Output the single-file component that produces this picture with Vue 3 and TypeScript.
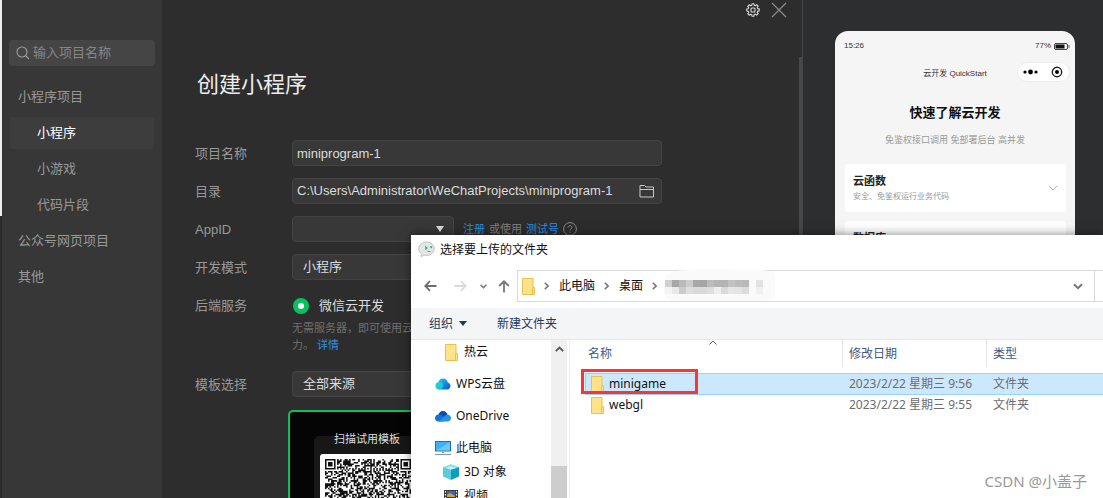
<script setup lang="ts">
import { ref } from 'vue'

interface NavItem { label: string; child?: boolean }
interface TreeItem { label: string; icon: string; group?: boolean; nested?: boolean }
interface FileRow { name: string; date: string; type: string }

const keyword = ref('')
const active = ref('小程序')
const projectName = ref('miniprogram-1')
const directory = ref('C:\\Users\\Administrator\\WeChatProjects\\miniprogram-1')

const nav: NavItem[] = [
  { label: '小程序项目' },
  { label: '小程序', child: true },
  { label: '小游戏', child: true },
  { label: '代码片段', child: true },
  { label: '公众号网页项目' },
  { label: '其他' },
]

const tree: TreeItem[] = [
  { label: '热云', icon: 'folder', nested: true },
  { label: 'WPS云盘', icon: 'wps', group: true },
  { label: 'OneDrive', icon: 'onedrive', group: true },
  { label: '此电脑', icon: 'pc', group: true },
  { label: '3D 对象', icon: 'cube', nested: true },
  { label: '视频', icon: 'video', nested: true },
]

const selected = ref('minigame')
const files: FileRow[] = [
  { name: 'minigame', date: '2023/2/22 星期三 9:56', type: '文件夹' },
  { name: 'webgl', date: '2023/2/22 星期三 9:55', type: '文件夹' },
]

const mosaicTop = ['#d0d0d0', '#a8a8a8', '#bababa', '#cccccc', '#a8a8a8', '#a5a5a5', '#bcbcbc', '#b4b4b4', '#b4b4b4', '#c2c2c2', '#bcbcbc', '#bababa']
const mosaicBottom = ['#f4f4f4', '#e8e8e8', '#cccccc', '#dedede', '#dadada', '#dadada', '#dedede', '#eeeeee', '#dadada', '#e6e6e6', '#e4e4e4', '#dcdcdc']

/* 57 x 57 symbol: three finders, alignment marks, timing lines, seeded data */
function buildCode(size: number): string {
  let seed = 20230222
  const next = () => {
    seed = (seed * 1103515245 + 12345) % 2147483648
    return seed / 2147483648
  }
  const finders = [[3, 3], [size - 4, 3], [3, size - 4]]
  const marks = [[28, 6], [6, 28], [28, 28], [50, 28], [28, 50], [50, 50]]
  let d = ''
  for (let y = 0; y < size; y++) {
    for (let x = 0; x < size; x++) {
      let on = next() > 0.48
      if (x === 6 || y === 6) on = (x + y) % 2 === 0
      for (const [cx, cy] of marks) {
        const r = Math.max(Math.abs(x - cx), Math.abs(y - cy))
        if (r <= 2) on = r !== 1
      }
      for (const [cx, cy] of finders) {
        const r = Math.max(Math.abs(x - cx), Math.abs(y - cy))
        if (r <= 4) on = r === 3 || r <= 1
      }
      if (on) d += `M${x} ${y}h1v1h-1z`
    }
  }
  return d
}
const code = buildCode(57)
</script>

<template>
  <div class="screen">
    <div class="edge"></div>

    <aside class="sidebar">
      <label class="search">
        <svg width="14" height="14" viewBox="0 0 14 14" fill="none" stroke="#a0a0a0" stroke-width="1.1"><circle cx="6" cy="6" r="5" /><path d="M9.6 9.6L13 13" /></svg>
        <input v-model="keyword" type="text" placeholder="输入项目名称" aria-label="输入项目名称" />
      </label>
      <nav class="nav">
        <button v-for="n in nav" :key="n.label" type="button" :class="{ child: n.child, on: n.label === active }" @click="active = n.label">{{ n.label }}</button>
      </nav>
    </aside>

    <main class="main">
      <div class="tools">
        <button type="button" aria-label="设置">
          <svg width="14" height="14" viewBox="0 0 14 14" fill="none" stroke="#dcdcdc" stroke-width="1.1" stroke-linejoin="round"><path d="M5.8 2.2L6 .7h2l.2 1.5 1.2.5 1.3-1 1.5 1.5-1 1.3.5 1.2 1.5.2v2l-1.5.2-.5 1.2 1 1.3-1.5 1.5-1.3-1-1.2.5L8 13.3H6l-.2-1.5-1.2-.5-1.3 1-1.5-1.5 1-1.3-.5-1.2L.7 8V6l1.5-.2.5-1.2-1-1.3 1.5-1.5 1.3 1z" /><rect x="5" y="5" width="4" height="4" rx="1" /></svg>
        </button>
        <button type="button" aria-label="关闭">
          <svg width="16" height="16" viewBox="0 0 16 16" stroke="#8c8c8c" stroke-width="1.2"><path d="M1 1l14 14M15 1L1 15" /></svg>
        </button>
      </div>
      <h1>创建小程序</h1>

      <form class="form" @submit.prevent>
        <label class="name" for="f-name">项目名称</label>
        <input id="f-name" v-model="projectName" class="field" type="text" />

        <label class="name" for="f-dir">目录</label>
        <div class="field dir">
          <input id="f-dir" v-model="directory" type="text" />
          <button type="button" aria-label="选择目录">
            <svg width="16" height="14" viewBox="0 0 16 14" fill="none" stroke="#c8c8c8"><path d="M1 13V1.5h4.5L7 3h7.5v10z" /><path d="M1 5.5h13.5" /></svg>
          </button>
        </div>

        <label class="name" for="f-app">AppID</label>
        <div class="appid">
          <span class="pick">
            <select id="f-app" class="field"><option></option></select>
            <svg width="8" height="6" viewBox="0 0 8 6"><path d="M0 0h8L4 6z" fill="#dcdcdc" /></svg>
          </span>
          <span class="tips"><a href="#">注册</a><span>或使用</span><a href="#">测试号</a></span>
          <svg class="help" width="14" height="14" viewBox="0 0 14 14" fill="none" stroke="#8a8a8a"><circle cx="7" cy="7" r="6.4" /><path d="M5 5.6C5 3 9 3 9 5.4 9 7 7 6.800 7 8.400M7 9.600v1.200" /></svg>
        </div>

        <label class="name" for="f-mode">开发模式</label>
        <select id="f-mode" class="field"><option>小程序</option></select>

        <span class="name">后端服务</span>
        <div class="service">
          <label><input type="radio" name="service" checked />微信云开发</label>
          <p>无需服务器，即可使用云<br />力。 <a href="#">详情</a></p>
        </div>

        <label class="name" for="f-tpl">模板选择</label>
        <select id="f-tpl" class="field"><option>全部来源</option></select>
      </form>

      <section class="template">
        <div class="scan">
          <span>扫描试用模板</span>
          <div class="code"><svg width="86" height="86" viewBox="0 0 57 57"><path :d="code" fill="#111" /></svg></div>
        </div>
      </section>
      <i class="thumb"></i>
    </main>

    <aside class="preview">
      <div class="phone">
        <div class="status">
          <span>15:26</span>
          <span class="power">77%<svg width="16" height="7" viewBox="0 0 16 7"><rect x=".5" y=".5" width="13" height="6" rx="1.500" fill="none" stroke="#444" /><rect x="1.500" y="1.500" width="9" height="4" fill="#111" /><path d="M15 2.200v2.600" stroke="#555" /></svg></span>
        </div>
        <div class="bar">
          <span>云开发 QuickStart</span>
          <svg class="capsule" width="53" height="20" viewBox="0 0 53 20"><rect x=".5" y=".5" width="52" height="19" rx="9.500" fill="#fff" stroke="#ebebeb" /><circle cx="8" cy="10" r="1.600" /><circle cx="13.500" cy="10" r="2.400" /><circle cx="19" cy="10" r="1.600" /><circle cx="40" cy="10" r="4.700" fill="none" stroke="#222" stroke-width="1.400" /><circle cx="40" cy="10" r="2" /></svg>
        </div>
        <h2>快速了解云开发</h2>
        <p>免鉴权接口调用 免部署后台 高并发</p>
        <div class="card">
          <div><b>云函数</b><small>安全、免鉴权运行业务代码</small></div>
          <svg width="10" height="6" viewBox="0 0 10 6" fill="none" stroke="#b0b0b0"><path d="M1 1l4 4 4-4" /></svg>
        </div>
        <div class="card"><div><b>数据库</b></div></div>
      </div>
    </aside>

    <section class="dialog" role="dialog" aria-label="选择要上传的文件夹">
      <header class="caption">
        <svg width="17" height="17" viewBox="0 0 17 17"><path d="M8.500 1C4 1 .8 3.900.8 7.800c0 2.300 1 4 2.700 5.200l-.6 2.600 2.900-1.500c5.600 1.300 10.400-1.600 10.400-6.300C16.200 3.900 13 1 8.500 1z" fill="#e4e6e5" stroke="#b4b8b6" stroke-width=".8" /><path d="M7 5.500l2 1.500-2 1.500M12 5.800h1.500v1.500M9.500 10.500h3" fill="none" stroke="#22b573" stroke-width="1.200" /></svg>
        <span>选择要上传的文件夹</span>
      </header>

      <div class="navbar">
        <button type="button" aria-label="后退"><svg width="13" height="12" viewBox="0 0 13 12" fill="none" stroke="#6e6e6e" stroke-width="1.800"><path d="M12.500 6H1.500M6 1.200L1.300 6 6 10.800" /></svg></button>
        <button type="button" class="fwd" aria-label="前进"><svg width="13" height="12" viewBox="0 0 13 12" fill="none" stroke="#dadada" stroke-width="1.800"><path d="M.5 6h11M7 1.200L11.700 6 7 10.800" /></svg></button>
        <button type="button" class="recent" aria-label="最近"><svg width="7" height="5" viewBox="0 0 7 5" fill="none" stroke="#777" stroke-width="1.600"><path d="M.6.8l2.900 2.900L6.400.8" /></svg></button>
        <button type="button" class="up" aria-label="上移"><svg width="12" height="13" viewBox="0 0 12 13" fill="none" stroke="#777" stroke-width="1.800"><path d="M6 12.500V1.500M1.200 6L6 1.300 10.800 6" /></svg></button>
        <div class="address">
          <svg width="13" height="17" viewBox="0 0 13 17"><path d="M.5.5h10.500v9h1.500v7H.5z" fill="#ffe28a" stroke="#e9c24d" /><path d="M10.500 9.500v7" stroke="#e9c24d" /></svg>
          <svg class="sep" width="5" height="8" viewBox="0 0 5 8"><path d="M.8.800L4 4 .8 7.200" /></svg>
          <span>此电脑</span>
          <svg class="sep" width="5" height="8" viewBox="0 0 5 8"><path d="M.8.800L4 4 .8 7.200" /></svg>
          <span>桌面</span>
          <svg class="sep" width="5" height="8" viewBox="0 0 5 8"><path d="M.8.800L4 4 .8 7.200" /></svg>
          <svg class="smudge" width="118" height="34" viewBox="0 0 118 34">
            <path d="M12 2Q30 0 48 0H68L72 1H100Q110 2 112 6V26Q108 31 100 32H20Q2 32 1 24V12Q3 4 12 2z" fill="#fafafa" />
            <rect v-for="(c, i) in mosaicTop" :key="'t' + i" :x="2 + i * 7" y="11" width="7" height="7" :fill="c" />
            <rect v-for="(c, i) in mosaicBottom" :key="'b' + i" :x="2 + i * 7" y="18" width="7" height="7" :fill="c" />
            <rect x="93" y="11" width="7" height="7" fill="#e2e2e2" /><rect x="93" y="18" width="7" height="7" fill="#f0f0f0" />
          </svg>
          <button type="button" class="drop" aria-label="展开"><svg width="10" height="7" viewBox="0 0 10 7" fill="none" stroke="#777" stroke-width="2"><path d="M1 1.200l4 4 4-4" /></svg></button>
          <i class="tail"></i>
        </div>
      </div>

      <div class="commands">
        <button type="button">组织<svg width="8" height="5" viewBox="0 0 8 5"><path d="M0 0h8L4 5z" fill="#1e395b" /></svg></button>
        <button type="button">新建文件夹</button>
      </div>

      <div class="body">
        <ul class="tree">
          <li v-for="t in tree" :key="t.label" :class="{ group: t.group, nested: t.nested }">
            <svg v-if="t.icon === 'folder'" width="16" height="17" viewBox="0 0 16 17"><path d="M2.500.5h10.500v9h1.500v7h-12z" fill="#ffe28a" stroke="#e9c24d" /><path d="M12.500 9.500v7" stroke="#e9c24d" /></svg>
            <svg v-else-if="t.icon === 'wps'" width="16" height="16" viewBox="0 0 16 16"><defs><linearGradient id="wps" x1="0" x2="1" y1="0" y2="1"><stop offset="0" stop-color="#2bd4e8" /><stop offset="1" stop-color="#0b4fe0" /></linearGradient></defs><path d="M8 2.500c3 0 4.500 2 4.800 4 1.700.4 2.700 1.800 2.700 3.300 0 2-1.500 3.700-3.500 3.700H4.500c-2.200 0-4-1.600-4-3.700 0-2 1.200-3.200 2.900-3.500C4 4 5.500 2.500 8 2.500z" fill="url(#wps)" /><circle cx="4.500" cy="9.500" r="3.700" fill="#1fe0cf" opacity=".7" /></svg>
            <svg v-else-if="t.icon === 'onedrive'" width="16" height="16" viewBox="0 0 16 16"><path d="M3 8.500C3.300 5.500 5 3 7.800 3c2.400 0 4 1.500 4.700 3.500L10 10z" fill="#0a4fa3" /><path d="M3.500 6.500C1.500 6.500 0 8.200 0 10.200 0 12.200 1.500 13.500 3.500 13.500h5L11 10 6.500 7.300c-1-.6-2-.8-3-.8z" fill="#1273d0" /><path d="M12 6.500c2.300 0 4 1.500 4 3.600s-1.500 3.400-3.500 3.400h-9L11 7z" fill="#2492e6" /></svg>
            <svg v-else-if="t.icon === 'pc'" width="16" height="16" viewBox="0 0 16 16"><rect x=".5" y="1.500" width="15" height="9.500" fill="#3fb0f3" stroke="#2a6fa8" /><path d="M1 10.500L15 2v8.500z" fill="#67c8fa" /><path d="M7 11.500h2v1.500H7z" fill="#9aa7b3" /><path d="M0 14.500h16" stroke="#8b9bad" stroke-width="1.200" /></svg>
            <svg v-else-if="t.icon === 'cube'" width="16" height="16" viewBox="0 0 16 16"><path d="M0 3l8-3 8 3-8 2.500z" fill="#8fe0ea" /><path d="M0 3l8 2.500V16L0 12.500z" fill="#5ccbdb" /><path d="M16 3L8 5.500V16l8-3.500z" fill="#0f9cc0" /><path d="M3 4l5-1.500L13 4 8 5.500z" fill="#c9f4f7" /></svg>
            <svg v-else width="16" height="16" viewBox="0 0 16 16"><path d="M1 2h14v14H1z" fill="#3a3a3a" /><path d="M4 3h8v6H4z" fill="#3c62c8" /><path d="M4 7l3-2 5 3v1H4z" fill="#d5a62b" /><path d="M4 10h8v6H4z" fill="#8aa0c8" /><path d="M2.500 3v13M13.500 3v13" stroke="#fff" stroke-width="1.200" stroke-dasharray="1.500 1.500" /></svg>
            <span>{{ t.label }}</span>
          </li>
        </ul>
        <div class="scroll">
          <svg width="9" height="6" viewBox="0 0 9 6" fill="none" stroke="#555" stroke-width="1.800"><path d="M.8 5.200L4.500 1.500l3.700 3.700" /></svg>
          <i></i>
        </div>
        <div class="files">
          <table>
            <thead>
              <tr>
                <th class="c-name">名称<svg class="sort" width="8" height="5" viewBox="0 0 8 5" fill="none" stroke="#666"><path d="M.5 4.500L4 1l3.500 3.500" /></svg></th>
                <th class="c-date">修改日期</th>
                <th>类型</th>
              </tr>
            </thead>
            <tbody>
              <tr v-for="f in files" :key="f.name" :class="{ sel: f.name === selected }" @click="selected = f.name">
                <td>
                  <div class="file">
                    <svg width="13" height="17" viewBox="0 0 13 17"><path d="M.5.500h10.500v9h1.500v7H.5z" fill="#ffe28a" stroke="#e9c24d" /><path d="M10.500 9.500v7" stroke="#e9c24d" /></svg>
                    <span>{{ f.name }}</span>
                    <i v-if="f.name === 'minigame'" class="mark"></i>
                  </div>
                </td>
                <td>{{ f.date }}</td>
                <td>{{ f.type }}</td>
              </tr>
            </tbody>
          </table>
        </div>
      </div>
      <span class="credit">CSDN @小盖子</span>
    </section>
  </div>
</template>

<style>
body { margin: 0; background: #2d2d2d; }
</style>

<style scoped>
* { box-sizing: border-box; }
button, input, select { font: inherit; color: inherit; border: 0; padding: 0; margin: 0; background: none; outline: 0; }
button { cursor: pointer; }
svg { display: block; flex: none; }
a { color: #2a8fe6; text-decoration: none; }

.screen {
  position: relative; display: flex; height: 100vh; overflow: hidden; background: #2d2d2d; color: #999;
  font: 13px/18px "Liberation Sans", "Noto Sans CJK SC", sans-serif;
}
.edge { width: 2px; background: linear-gradient(#eee 216px, #2b2b2b 216px); }

.sidebar { width: 160px; flex: none; padding: 40px 8px 0; background: #373737; }
.search { display: flex; align-items: center; gap: 3px; height: 26px; margin: 0 -1px; padding: 0 7px; border-radius: 4px; background: #454545; }
.search input { flex: 1; min-width: 0; }
.search input::placeholder { color: #858585; opacity: 1; }
.nav { display: flex; flex-direction: column; gap: 4px; margin-top: 15px; }
.nav button { height: 32px; padding: 0 8px; border-radius: 3px; text-align: left; }
.nav .child { padding-left: 27px; }
.nav .on { background: #3d3d3d; color: #fff; }

.main { position: relative; flex: 1; min-width: 0; padding: 0 140px 0 33px; border-right: 1px solid #444; }
.tools { display: flex; justify-content: flex-end; align-items: center; gap: 11px; height: 20px; margin-right: -125px; }
h1 { margin: 49px 0 39px 2px; font-size: 22px; line-height: 32px; font-weight: 400; color: #ececec; }
.form { display: grid; grid-template-columns: 97px 1fr; row-gap: 12px; }
.name { height: 26px; line-height: 27px; }
.field { width: 100%; height: 26px; padding: 0 4px; border: 1px solid #444; border-radius: 4px; background: #383838; color: #dcdcdc; }
select.field { appearance: none; padding: 0 10px; }
.dir { display: flex; align-items: center; padding-right: 6px; }
.dir input { flex: 1; min-width: 0; }
.appid { display: flex; align-items: center; font-size: 11px; color: #808080; }
.pick { position: relative; width: 162px; margin-right: 9px; }
.pick svg { position: absolute; right: 10px; top: 10px; }
.tips { display: flex; gap: 4px; }
.help { margin-left: 4px; }
.service label { display: flex; align-items: center; gap: 10px; height: 28px; color: #dcdcdc; }
.service input { appearance: none; width: 16px; height: 16px; margin-left: 1px; border: 5px solid #07c160; border-radius: 50%; background: #fff; }
.service p { margin: 0 0 5px; font-size: 11px; line-height: 17px; color: #707070; }
.template { width: 200px; height: 200px; margin: 13px 0 0 93px; padding: 24px 0 0 24px; border: 2px solid #07c160; border-radius: 5px; background: #050505; }
.scan { width: 140px; border-radius: 5px; background: #171717; font-size: 11px; color: #dcdcdc; }
.scan span { display: block; height: 18px; padding-left: 20px; line-height: 6px; }
.code { width: 96px; margin-left: 6px; padding: 5px; border-radius: 3px; background: #fff; }
.thumb { position: absolute; right: 0; top: 57px; bottom: 0; width: 3px; background: #484848; }

.preview { width: 300px; flex: none; padding: 31px 28px 0 32px; background: #2d2e2f; }
.phone { height: 400px; padding: 10px 9px 0; border-radius: 13px; background: #f5f5f5; color: #333; font-size: 8px; line-height: 10px; overflow: hidden; }
.status { display: flex; justify-content: space-between; margin-right: -4px; }
.power { display: flex; align-items: center; gap: 3px; }
.bar { position: relative; display: flex; justify-content: center; align-items: flex-end; height: 20px; margin-top: 11px; padding-bottom: 3px; }
.capsule { position: absolute; right: -4px; top: 0; }
h2 { margin: 21px 0 0; font-size: 13px; line-height: 20px; text-align: center; color: #111; }
.phone p { margin: 11px 0 18px; font-size: 9px; line-height: 12px; text-align: center; color: #999; }
.card { display: flex; justify-content: space-between; align-items: center; min-height: 48px; margin: 0 0 9px 1px; padding: 0 8px; border-radius: 3px; background: #fff; }
.card div { align-self: flex-start; padding-top: 9px; }
.card b { display: block; font-size: 11px; line-height: 16px; color: #222; }
.card small { display: block; font-size: 8px; line-height: 16px; color: #999; }

.dialog {
  position: absolute; left: 411px; top: 235px; right: 0; bottom: 0; display: flex; flex-direction: column; overflow: hidden;
  background: #fff; color: #111; box-shadow: 0 0 10px rgba(0, 0, 0, .5);
  font: 12px/16px "Noto Sans", "Noto Sans CJK SC", sans-serif;
}
.caption { display: flex; align-items: center; gap: 5px; height: 29px; flex: none; padding-left: 7px; }
.navbar { display: flex; align-items: center; height: 44px; flex: none; padding-left: 13px; }
.fwd { margin-left: 17px; }
.recent { margin-left: 13px; }
.up { margin: 0 7px 0 11px; }
.address { position: relative; display: flex; align-items: center; flex: 1; height: 32px; border: 1px solid #d9d9d9; border-right: 0; padding-left: 4px; }
.sep { margin: 0 10px 0 9px; fill: none; stroke: #777; stroke-width: 1.600; }
.smudge { margin-left: -4px; }
.drop { margin-left: auto; }
.tail { align-self: stretch; width: 9px; margin-left: 11px; border-left: 1px solid #d9d9d9; }
.commands { display: flex; gap: 30px; height: 32px; flex: none; padding-left: 18px; background: #f4f5f7; border-bottom: 1px solid #e6e7ea; color: #1e395b; }
.commands button { display: flex; align-items: center; gap: 6px; }
.body { display: flex; flex: 1; min-height: 0; overflow: hidden; }
.tree { width: 140px; flex: none; margin: 0; padding: 0; list-style: none; }
.tree li { display: flex; align-items: center; gap: 5px; height: 24px; padding-left: 24px; }
.tree .nested { padding-left: 32px; }
.tree .group { margin-top: 8px; }
.scroll { display: flex; flex-direction: column; align-items: center; justify-content: space-between; width: 16px; flex: none; padding-top: 6px; background: #f0f0f0; }
.scroll i { width: 100%; height: 32px; background: #cdcdcd; }
.files { flex: 1; min-width: 0; margin-left: 2px; padding-left: 15px; border-left: 1px solid #eee; }
table { width: 100%; table-layout: fixed; border-spacing: 0; }
th { position: relative; height: 27px; padding: 0 6px; border-left: 1px solid #e5e5e5; font-weight: 400; text-align: left; color: #44597a; }
.c-name { width: 257px; padding-left: 3px; border: 0; }
.c-date { width: 144px; }
.sort { position: absolute; left: 124px; top: 0; }
tbody::before { content: ""; display: block; height: 6px; }
td { height: 20px; padding: 0 7px; color: #6d6d6d; white-space: nowrap; }
td:first-child { padding-left: 5px; border-left: 1px solid transparent; }
.sel td { height: 22px; background: #cce8ff; border: solid #99d1ff; border-width: 1px 0; }
.sel td:first-child { border-left-width: 1px; }
.file { position: relative; display: flex; align-items: center; gap: 5px; color: #111; }
.mark { position: absolute; left: -10px; top: -7px; width: 117px; height: 25px; border: 3px solid #f93535; }
.credit { position: absolute; right: 16px; bottom: 6px; font-size: 15px; line-height: 22px; color: #999; }
</style>
